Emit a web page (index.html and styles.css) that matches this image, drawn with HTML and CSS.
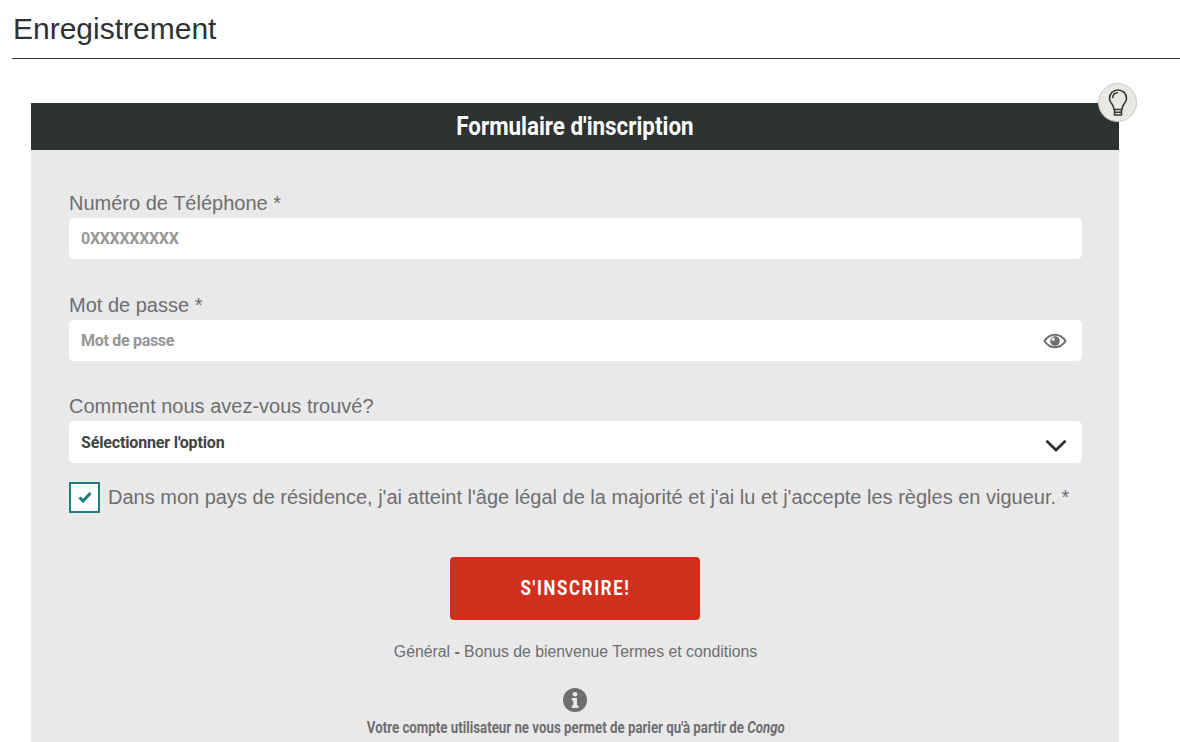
FILE: index.html
```html
<!DOCTYPE html>
<html lang="fr">
<head>
    <meta charset="UTF-8">
    <meta name="viewport" content="width=device-width, initial-scale=1.0">
    <title>Enregistrement</title>
    <link rel="stylesheet" href="styles.css">
</head>
<body>
    <div class="page">
        <h1 class="page-title">Enregistrement</h1>
        <div class="card">
            <button class="tip" type="button" aria-label="Astuce">
                <svg width="22" height="32" viewBox="0 0 22 32" fill="none" stroke="#33383a" stroke-width="1.6" stroke-linecap="round" stroke-linejoin="round">
                    <path d="M7 22.500c0-3-1.200-4.300-2.600-6.200C3 14.500 2.500 13 2.500 11.200 2.500 6.500 6.300 3 11 3s8.500 3.500 8.500 8.200c0 1.800-.5 3.300-1.900 5.100-1.400 1.900-2.600 3.200-2.600 6.200z"/>
                    <path d="M5.800 10.500C6 8 8 6 10.500 5.800"/>
                    <path d="M7.500 22.500v5.500h7v-5.500M7.500 25.200h7"/>
                </svg>
            </button>
            <h2 class="card-title"><span>Formulaire d'inscription</span></h2>
            <form class="form">
                <div class="form-group">
                    <label for="phone">Numéro de Téléphone *</label>
                    <input class="field" type="text" id="phone" placeholder="0XXXXXXXXX">
                </div>
                <div class="form-group">
                    <label for="password">Mot de passe *</label>
                    <div class="field-wrap">
                        <input class="field" type="password" id="password" placeholder="Mot de passe">
                        <svg class="eye" width="24" height="16" viewBox="0 0 24 16">
                            <path d="M1.500 8C4 4 7.800 1.800 12 1.800S20 4 22.500 8C20 12 16.200 14.200 12 14.200S4 12 1.500 8z" fill="none" stroke="#6d6e70" stroke-width="2"/>
                            <circle cx="12" cy="8" r="4.800" fill="#6d6e70"/>
                            <circle cx="10.200" cy="6.200" r="1.700" fill="#fff"/>
                        </svg>
                    </div>
                </div>
                <div class="form-group">
                    <label for="source">Comment nous avez-vous trouvé?</label>
                    <div class="select" id="source">
                        <span>Sélectionner l'option</span>
                        <svg width="22" height="13" viewBox="0 0 22 13" fill="none" stroke="#2d3233" stroke-width="2.800">
                            <path d="M1.500 1.800L11 11l9.500-9.200"/>
                        </svg>
                    </div>
                </div>
                <div class="check-row">
                    <span class="check">
                        <svg width="14" height="12" viewBox="0 0 14 12" fill="none" stroke="#1f7f7d" stroke-width="3">
                            <path d="M1.500 6.500L5 10l7.500-8"/>
                        </svg>
                    </span>
                    <span>Dans mon pays de résidence, j'ai atteint l'âge légal de la majorité et j'ai lu et j'accepte les règles en vigueur. *</span>
                </div>
                <button class="submit" type="button"><span>S'INSCRIRE!</span></button>
                <p class="terms">Général <b>-</b> Bonus de bienvenue Termes et conditions</p>
                <svg class="info" width="24" height="24" viewBox="0 0 24 24">
                    <circle cx="12" cy="12" r="12" fill="#6d6e70"/>
                    <circle cx="12" cy="6.200" r="2.300" fill="#e9e9e9"/>
                    <path d="M8.800 10h5.200v7.500h1.500V20H8.800v-2.500h1.500v-5H8.800z" fill="#e9e9e9"/>
                </svg>
                <p class="notice"><span>Votre compte utilisateur ne vous permet de parier qu'à partir de <i>Congo</i></span></p>
            </form>
        </div>
    </div>
</body>
</html>
```

FILE: styles.css
```css
* {
    box-sizing: border-box;
}
html, body {
    margin: 0;
    height: 742px;
    overflow: hidden;
    background-color: #fff;
}
body {
    font-family: "Liberation Sans", Arial, sans-serif;
    color: #6d6e70;
}
.page {
    padding-left: 12px;
}
.page-title {
    margin: 0;
    height: 59px;
    padding: 11px 0 0 1px;
    font-size: 30px;
    line-height: 36px;
    font-weight: 400;
    color: #2d3233;
    border-bottom: 1px solid #2d3233;
}
.card {
    position: relative;
    width: 1088px;
    margin: 44px 0 0 19px;
    background-color: #e9e9e9;
}
.tip {
    position: absolute;
    top: -20px;
    right: -18px;
    width: 39px;
    height: 39px;
    padding: 0;
    display: flex;
    align-items: center;
    justify-content: center;
    border: 1px solid #c9c9c4;
    border-radius: 50%;
    background-color: #e9e9e2;
}
.card-title {
    margin: 0;
    height: 47px;
    background-color: #2d3233;
    color: #fff;
    text-align: center;
    font-family: Roboto, sans-serif;
    font-size: 26px;
    line-height: 47px;
    font-weight: 700;
}
.card-title span, .submit span, .notice span {
    display: inline-block;
    transform: scaleX(0.84);
    white-space: nowrap;
}
.card-title span {
    transform: scaleX(0.86);
}
.notice span {
    transform: scaleX(0.83);
}
.form {
    display: flex;
    flex-direction: column;
    padding: 42px 37px 40px 38px;
}
.form-group {
    margin-bottom: 35px;
}
.form-group:nth-child(2) {
    margin-bottom: 34px;
}
.form-group:nth-child(3) {
    margin-bottom: 0;
}
.form-group label {
    display: block;
    font-size: 20px;
    line-height: 23px;
    margin-bottom: 3px;
}
.field-wrap {
    position: relative;
}
.field {
    display: block;
    width: 100%;
    height: 41px;
    padding: 0 12px;
    border: none;
    border-radius: 5px;
    background-color: #fff;
    font-family: Roboto, sans-serif;
    font-size: 16px;
    letter-spacing: -0.3px;
    font-weight: 700;
    outline: none;
}
.field::placeholder {
    color: #969696;
}
.eye {
    position: absolute;
    top: 13px;
    right: 15px;
}
.select {
    display: flex;
    align-items: center;
    justify-content: space-between;
    height: 42px;
    padding: 0 15px 0 12px;
    border-radius: 5px;
    background-color: #fff;
    font-family: Roboto, sans-serif;
    font-size: 16px;
    letter-spacing: -0.15px;
    font-weight: 700;
    color: #3f4344;
}
.select svg {
    margin-top: 7px;
}
.check-row {
    display: flex;
    align-items: center;
    gap: 8px;
    margin-top: 18px;
    font-size: 20px;
    line-height: 32px;
    white-space: nowrap;
}
.check {
    display: flex;
    align-items: center;
    justify-content: center;
    width: 31px;
    height: 31px;
    border: 2px solid #1f7f7d;
    background-color: #fff;
}
.submit {
    align-self: center;
    width: 250px;
    height: 63px;
    margin: 44px 2px 0 0;
    padding: 0 0 2px 2px;
    border: none;
    border-radius: 4px;
    background-color: #d2301f;
    color: #fff;
    font-family: Roboto, sans-serif;
    font-size: 20px;
    font-weight: 700;
    letter-spacing: 2px;
}
.terms {
    margin: 23px 0 0;
    text-align: center;
    font-size: 15.8px;
    line-height: 18px;
}
.info {
    align-self: center;
    margin: 27px 2px 0 0;
}
.notice {
    margin: 7px 0 0;
    text-align: center;
    font-family: Roboto, sans-serif;
    font-size: 16px;
    line-height: 18px;
    font-weight: 700;
}
```
